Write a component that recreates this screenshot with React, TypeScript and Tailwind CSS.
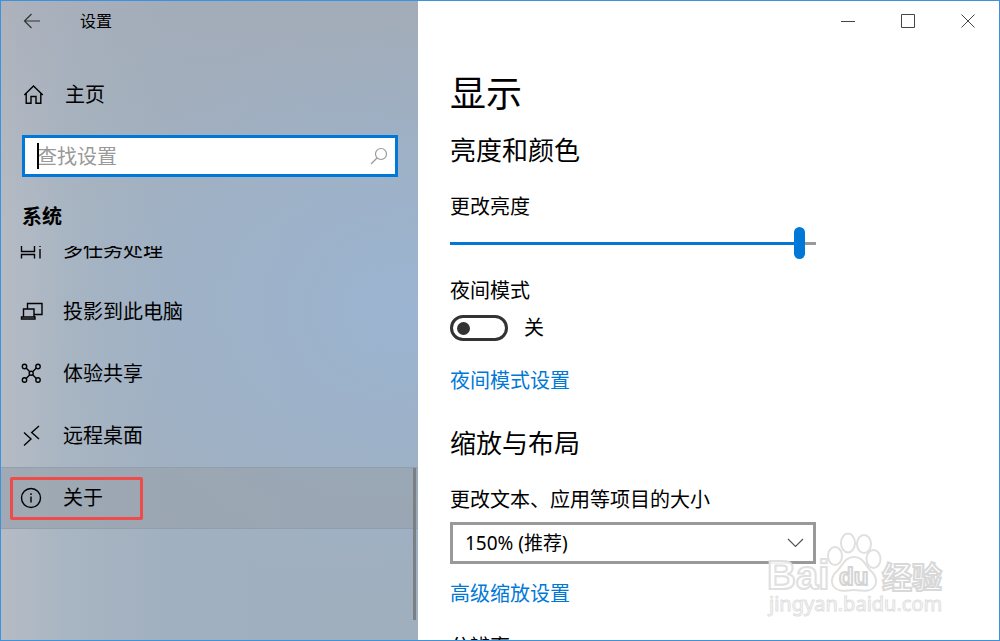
import React, { useState } from 'react';

interface NavItem {
  label: string;
  icon: React.ReactNode;
  highlighted?: boolean;
}

const iconProps = {
  width: 24,
  height: 24,
  viewBox: '0 0 24 24',
  fill: 'none',
  stroke: 'currentColor',
  strokeWidth: 1.4,
};

const navItems: NavItem[] = [
  {
    label: '多任务处理',
    icon: (
      <svg {...iconProps}>
        <path d="M2.500 4v9.500h13V4M2.500 20.500v-4h13v4M21 11v9.500M21 7v2" />
      </svg>
    ),
  },
  {
    label: '投影到此电脑',
    icon: (
      <svg {...iconProps}>
        <path d="M8.500 8.500V3.500H23v11h-7.500M4.500 17V9h10.500v8M2.500 17h13.500v2H2.500z" />
      </svg>
    ),
  },
  {
    label: '体验共享',
    icon: (
      <svg {...iconProps}>
        <circle cx="5.500" cy="4.500" r="2.200" />
        <circle cx="19" cy="4.500" r="2.200" />
        <circle cx="5.500" cy="18" r="2.200" />
        <circle cx="19" cy="18" r="2.200" />
        <circle cx="12.200" cy="11.200" r="2" />
        <path d="M7.100 6.100l3.700 3.700M17.400 6.100l-3.800 3.700M7.100 16.400l3.700-3.700M17.400 16.400l-3.800-3.700" />
      </svg>
    ),
  },
  {
    label: '远程桌面',
    icon: (
      <svg {...iconProps}>
        <path d="M5 8.500l7 6.500-7 6.500M20 2l-7.300 6.500 7.300 6.500" />
      </svg>
    ),
  },
  {
    label: '关于',
    highlighted: true,
    icon: (
      <svg {...iconProps}>
        <circle cx="12" cy="12" r="9.500" />
        <path d="M12 10.500v6M12 7.300v1.600" />
      </svg>
    ),
  },
];

const Sidebar: React.FC = () => {
  const [query, setQuery] = useState('');

  return (
    <aside className="relative flex w-[417px] shrink-0 flex-col bg-[radial-gradient(ellipse_at_100%_48%,#9bb4d1,transparent_62%),linear-gradient(to_bottom,#a5a9b380,transparent_35%),linear-gradient(to_right,#b5bbc5,#a8b5c2_16%,#a1b0c0_40%,#a0afbe)]">
      <header className="flex h-10 items-center gap-9 pl-[19px]">
        <button aria-label="返回" className="flex size-6 items-center justify-center">
          <svg width="18" height="16" viewBox="0 0 18 16" fill="none" stroke="#333333" strokeWidth="1.200">
            <path d="M17 8H1.500M8.500 1L1.500 8l7 7" />
          </svg>
        </button>
        <span className="text-base">设置</span>
      </header>

      <button className="mt-[34px] flex h-10 items-center gap-5 pl-5 text-xl">
        <svg {...iconProps}>
          <path d="M3.300 12L12.500 3l9.300 9M5.200 10.500V20.300h4.800v-6.800h5v6.800h4.800V10.500" />
        </svg>
        主页
      </button>

      <div className="relative mr-5 ml-[21px] mt-5 flex h-[42px] items-center">
        <input
          type="text"
          aria-label="查找设置"
          placeholder="查找设置"
          value={query}
          onChange={(e) => setQuery(e.target.value)}
          className="size-full border-3 border-[#0078d7] bg-white pr-10 pl-3 text-xl outline-none placeholder:text-[#999999]"
        />
        <span className="absolute left-[15px] h-[26px] w-[2px] bg-black" />
        <svg className="absolute right-2.5" width="18" height="18" viewBox="0 0 18 18" fill="none" stroke="#999999" strokeWidth="1.200">
          <circle cx="11" cy="7" r="5.500" />
          <path d="M7 11l-6 6" />
        </svg>
      </div>

      <h2 className="mt-[26px] pl-[21px] text-xl leading-7 font-bold">系统</h2>

      {/* list is scrolled down, so its first row is cut by the top edge */}
      <nav className="relative mt-[15px] flex-1 overflow-hidden">
        <ul className="-mt-[27px]">
          {navItems.map((item) => (
            <li key={item.label} className="relative">
              <button
                className={`flex h-[62px] w-full items-center gap-5 pl-[18px] text-xl ${item.highlighted ? 'border-y border-[#8c9aa8]/60 bg-[#98a3ad]/70' : ''}`}
              >
                {item.icon}
                {item.label}
              </button>
              {item.highlighted && (
                <span className="pointer-events-none absolute top-2.5 left-[9px] h-[43px] w-[133px] rounded-xs border-3 border-[#ee4b4b]" />
              )}
            </li>
          ))}
        </ul>
        <span className="absolute right-0.5 bottom-5 h-[152px] w-[3px] bg-[#7b8086]" />
      </nav>
    </aside>
  );
};

const WindowControls: React.FC = () => (
  <div className="mr-px flex h-10 justify-end text-[#444444]">
    <button aria-label="最小化" className="flex w-15 items-center justify-center">
      <svg width="14" height="14" viewBox="0 0 14 14" stroke="currentColor">
        <path d="M0 7.500h14" />
      </svg>
    </button>
    <button aria-label="最大化" className="flex w-15 items-center justify-center">
      <svg width="14" height="14" viewBox="0 0 14 14" fill="none" stroke="currentColor">
        <path d="M.5.5h13v13H.5z" />
      </svg>
    </button>
    <button aria-label="关闭" className="flex w-15 items-center justify-center">
      <svg width="14" height="14" viewBox="0 0 14 14" stroke="currentColor">
        <path d="M.5.5l13 13M13.500.5l-13 13" />
      </svg>
    </button>
  </div>
);

const Watermark: React.FC = () => (
  <svg
    className="pointer-events-none absolute right-12 bottom-5"
    width="190"
    height="90"
    viewBox="0 0 190 90"
    fill="#ffffff"
    fillOpacity="0.9"
    stroke="#e0e0e0"
    strokeWidth="2"
  >
    <g fontFamily="Liberation Sans, Noto Sans CJK SC, sans-serif" fontWeight="bold">
      <text x="6" y="59" fontSize="40">Bai</text>
      <ellipse cx="74" cy="26" rx="7" ry="9" />
      <ellipse cx="87" cy="13" rx="7" ry="9.500" />
      <ellipse cx="103" cy="14" rx="7" ry="9" />
      <ellipse cx="112.500" cy="29" rx="7" ry="9" />
      <path d="M93 27c-9 0-11 8-16 13-6 5-8 12-4 17 5 6 12 3 20 3s16 3 20-3c4-5 2-12-4-17-5-5-7-13-16-13z" />
      <text x="78" y="55" fontSize="24" stroke="#d4d4d4">du</text>
      <text x="121" y="58" fontSize="30" stroke="#d8d8d8">经验</text>
    </g>
    <text x="8" y="81" fontSize="20" fontFamily="Noto Sans, sans-serif" strokeWidth="1">
      jingyan.baidu.com
    </text>
  </svg>
);

const DisplaySettings: React.FC = () => {
  const [brightness, setBrightness] = useState(97);
  const [nightLight, setNightLight] = useState(false);
  const [scale, setScale] = useState('150');

  return (
    <div className="flex min-h-0 flex-1 flex-col items-start overflow-hidden pt-[29px] pr-8 pl-8 text-xl leading-7">
      <h1 className="shrink-0 text-4xl leading-[48px]">显示</h1>

      <h2 className="mt-3.5 shrink-0 text-[26px] leading-9">亮度和颜色</h2>
      <label htmlFor="brightness" className="mt-[25px] shrink-0">更改亮度</label>
      <input
        id="brightness"
        type="range"
        min={0}
        max={100}
        value={brightness}
        onChange={(e) => setBrightness(Number(e.target.value))}
        style={{ backgroundImage: `linear-gradient(to right, #0078d7 ${brightness}%, #999999 ${brightness}%)` }}
        className="mt-1.5 h-8 w-full max-w-[366px] shrink-0 appearance-none bg-[length:100%_3px] bg-center bg-no-repeat [&::-webkit-slider-thumb]:h-8 [&::-webkit-slider-thumb]:w-[11px] [&::-webkit-slider-thumb]:appearance-none [&::-webkit-slider-thumb]:rounded-full [&::-webkit-slider-thumb]:bg-[#0078d7]"
      />

      <label htmlFor="night-light" className="mt-4.5 shrink-0">夜间模式</label>
      <div className="mt-[9px] flex shrink-0 items-center gap-4">
        <input
          id="night-light"
          type="checkbox"
          role="switch"
          checked={nightLight}
          onChange={(e) => setNightLight(e.target.checked)}
          className="flex h-[26px] w-[58px] appearance-none items-center rounded-full border-3 border-[#333333] px-1 before:size-[13px] before:rounded-full before:bg-[#333333] checked:justify-end"
        />
        <span>{nightLight ? '开' : '关'}</span>
      </div>
      <a href="#night-light" className="mt-[25px] shrink-0 text-[#0078d7]">夜间模式设置</a>

      <h2 className="mt-[30px] shrink-0 text-[26px] leading-9">缩放与布局</h2>
      <label htmlFor="scale" className="mt-[25px] shrink-0">更改文本、应用等项目的大小</label>
      <div className="relative mt-2 flex w-full max-w-[366px] shrink-0 items-center">
        <select
          id="scale"
          value={scale}
          onChange={(e) => setScale(e.target.value)}
          className="h-[42px] w-full appearance-none border-3 border-[#999999] bg-white px-3 text-[19px]"
        >
          <option value="100">100%</option>
          <option value="125">125%</option>
          <option value="150">150% (推荐)</option>
          <option value="175">175%</option>
        </select>
        <svg className="pointer-events-none absolute right-3" width="17" height="10" viewBox="0 0 17 10" fill="none" stroke="#555555" strokeWidth="1.200">
          <path d="M1 1l7.500 7.500L16 1" />
        </svg>
      </div>
      <a href="#scale" className="mt-4 shrink-0 text-[#0078d7]">高级缩放设置</a>
      <span className="mt-[25px] shrink-0">分辨率</span>
    </div>
  );
};

export default function App() {
  return (
    <div className="relative flex h-screen overflow-hidden border border-[#3c93dc] bg-white font-['Noto_Sans','Noto_Sans_CJK_SC',sans-serif] text-black">
      <Sidebar />
      <main className="flex min-w-0 flex-1 flex-col">
        <WindowControls />
        <DisplaySettings />
      </main>
      <Watermark />
    </div>
  );
}
